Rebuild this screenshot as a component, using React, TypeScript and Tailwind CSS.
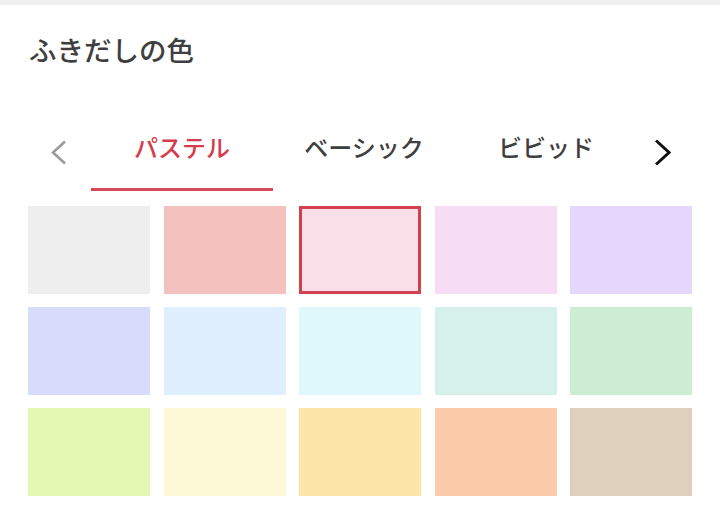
import { useState } from "react";

const rows: string[][] = [
  ["#eeeeee", "#f5c1bf", "#f9dfe7", "#f6ddf5", "#e4d7fb"],
  ["#d8dcfb", "#e0effe", "#dff8fb", "#d6f0ea", "#cdeed3"],
  ["#e4f8b3", "#fdf8d5", "#fbe6a7", "#fbcbaa", "#dfd0bd"],
];

const tabs = ["パステル", "ベーシック", "ビビッド"];

export default function App() {
  const [tab, setTab] = useState(0);
  const [selected, setSelected] = useState("#f9dfe7");

  return (
    <div
      className="w-[720px] h-[520px] bg-white overflow-hidden"
      style={{ fontFamily: '"Noto Sans CJK JP", "Noto Sans", sans-serif' }}
    >
      <div className="h-[5px] bg-[#efefef]" />

      {/* Title */}
      <div className="h-[90px] flex items-center px-[29px]">
        <h1 className="text-[27.5px] leading-none text-[#3f3f3f] font-medium">ふきだしの色</h1>
      </div>

      {/* Tabs */}
      <div className="mt-[38px] flex items-end px-[28px]">
        <button className="w-[63px] h-[58px] flex items-start pt-[7px] pl-[23px]">
          <svg width="16" height="25" viewBox="0 0 16 25" fill="none">
            <polyline points="14,1.5 2,12.5 14,23.5" stroke="#9a9a9a" strokeWidth="2.6" />
          </svg>
        </button>
        {tabs.map((t, i) => (
          <button
            key={t}
            onClick={() => setTab(i)}
            className={
              i === tab
                ? "w-[182px] h-[58px] flex items-start justify-center border-b-[3px] border-[#d64a58] text-[#d63c4c]"
                : "w-[182px] h-[58px] flex items-start justify-center border-b-[3px] border-transparent text-[#3f3f3f]"
            }
          >
            <span className="text-[24px] leading-[28px] font-medium">{t}</span>
          </button>
        ))}
        <button className="flex-1 h-[58px] flex items-start pt-[6px] pl-[17px]">
          <svg width="17" height="27" viewBox="0 0 17 27" fill="none">
            <polyline points="2,1.5 15,13.5 2,25.5" stroke="#111111" strokeWidth="3" />
          </svg>
        </button>
      </div>

      {/* Swatches */}
      <div className="mt-[15px] px-[28px] grid grid-cols-5 gap-x-[13.5px] gap-y-[13px]">
        {rows.flat().map((c) => (
          <button
            key={c}
            onClick={() => setSelected(c)}
            className={
              c === selected
                ? "h-[88px] border-[3px] border-[#d4404f]"
                : "h-[88px]"
            }
            style={{ backgroundColor: c }}
          />
        ))}
      </div>
    </div>
  );
}
